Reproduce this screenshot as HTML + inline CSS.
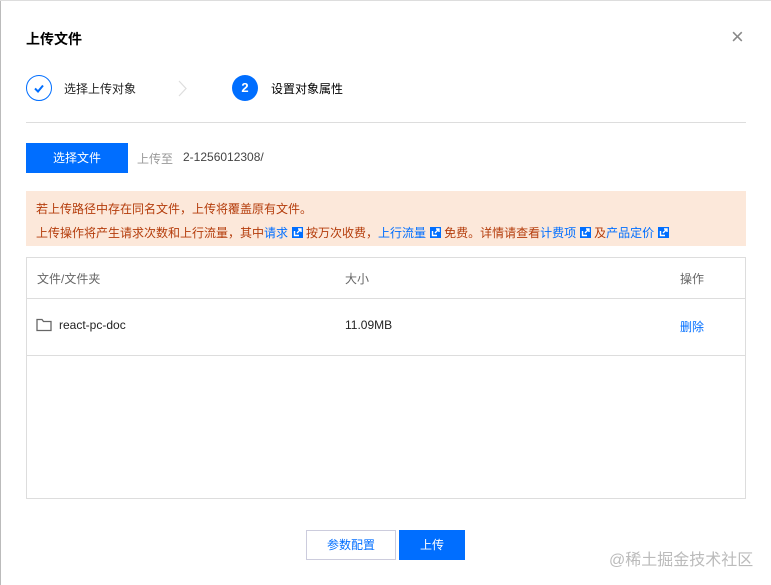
<!DOCTYPE html>
<html><head><meta charset="utf-8"><style>
*{margin:0;padding:0;box-sizing:border-box}
body{width:771px;height:585px;background:#fff;font-family:"Liberation Sans","Noto Sans CJK SC",sans-serif;font-size:12px;color:#000;position:relative;overflow:hidden}
.a{position:absolute}
.blue{color:#006eff}
.ext{display:inline-block;width:11px;height:11px;background:#006eff;vertical-align:-1px;margin:0 3px 0 4px;position:relative}
.ext svg{position:absolute;left:0;top:0}
</style></head><body>
<div class="a" style="left:0;top:0;width:1px;height:585px;background:#bbb"></div>
<div class="a" style="left:0;top:0;width:771px;height:1px;background:#ddd"></div>
<div class="a" style="left:26px;top:29px;font-size:14px;font-weight:bold;color:#000">上传文件</div>
<div class="a" style="left:731px;top:26px;font-size:22px;color:#888;line-height:22px">×</div>
<div class="a" style="left:26px;top:75px;width:26px;height:26px;border:1px solid #006eff;border-radius:50%"></div>
<svg class="a" style="left:32px;top:81px" width="14" height="14"><path d="M3 7.5l3 3 5-6" fill="none" stroke="#006eff" stroke-width="2"/></svg>
<div class="a" style="left:64px;top:80px;font-size:12px;color:#222">选择上传对象</div>
<svg class="a" style="left:177px;top:80px" width="12" height="17"><path d="M2 1l7 7.5-7 7.5" fill="none" stroke="#ddd" stroke-width="1.2"/></svg>
<div class="a" style="left:232px;top:75px;width:26px;height:26px;background:#006eff;border-radius:50%;color:#fff;font-weight:bold;text-align:center;line-height:26px;font-size:13px">2</div>
<div class="a" style="left:271px;top:80px;font-size:12px;color:#000">设置对象属性</div>
<div class="a" style="left:26px;top:122px;width:720px;height:1px;background:#ddd"></div>
<div class="a" style="left:26px;top:143px;width:102px;height:30px;background:#006eff;color:#fff;text-align:center;line-height:30px">选择文件</div>
<div class="a" style="left:137px;top:150px;color:#999">上传至</div>
<div class="a" style="left:183px;top:150px;color:#444">2-1256012308/</div>
<div class="a" style="left:26px;top:191px;width:720px;height:55px;background:#fce8da;color:#b43c0b;padding:6px 0 0 10px;line-height:25px">
<div>若上传路径中存在同名文件，上传将覆盖原有文件。</div>
<div style="margin-top:-1px">上传操作将产生请求次数和上行流量，其中<span class="blue">请求</span><span class="ext"><svg width="11" height="11"><path d="M2.5 4v4.5H7M5 6l4-4M6 2h3v3" fill="none" stroke="#fff" stroke-width="1.4"/></svg></span>按万次收费，<span class="blue">上行流量</span><span class="ext"><svg width="11" height="11"><path d="M2.5 4v4.5H7M5 6l4-4M6 2h3v3" fill="none" stroke="#fff" stroke-width="1.4"/></svg></span>免费。详情请查看<span class="blue">计费项</span><span class="ext"><svg width="11" height="11"><path d="M2.5 4v4.5H7M5 6l4-4M6 2h3v3" fill="none" stroke="#fff" stroke-width="1.4"/></svg></span>及<span class="blue">产品定价</span><span class="ext"><svg width="11" height="11"><path d="M2.5 4v4.5H7M5 6l4-4M6 2h3v3" fill="none" stroke="#fff" stroke-width="1.4"/></svg></span></div>
</div>
<div class="a" style="left:26px;top:257px;width:720px;height:242px;border:1px solid #ddd"></div>
<div class="a" style="left:27px;top:298px;width:718px;height:1px;background:#ddd"></div>
<div class="a" style="left:27px;top:355px;width:718px;height:1px;background:#ddd"></div>
<div class="a" style="left:37px;top:270px;color:#666">文件/文件夹</div>
<div class="a" style="left:345px;top:270px;color:#666">大小</div>
<div class="a" style="left:680px;top:270px;color:#666">操作</div>
<svg class="a" style="left:36px;top:318px" width="16" height="14"><path d="M1 1.5h5l1.5 2H15v9H1z" fill="none" stroke="#666" stroke-width="1.3"/></svg>
<div class="a" style="left:59px;top:318px;color:#222">react-pc-doc</div>
<div class="a" style="left:345px;top:318px;color:#222">11.09MB</div>
<div class="a" style="left:680px;top:318px"><span class="blue">删除</span></div>
<div class="a" style="left:306px;top:530px;width:90px;height:30px;border:1px solid #ccd;color:#006eff;text-align:center;line-height:28px">参数配置</div>
<div class="a" style="left:399px;top:530px;width:66px;height:30px;background:#006eff;color:#fff;text-align:center;line-height:30px">上传</div>
<div class="a" style="left:609px;top:546px;font-size:16px;color:#bbb">@稀土掘金技术社区</div>
</body></html>
